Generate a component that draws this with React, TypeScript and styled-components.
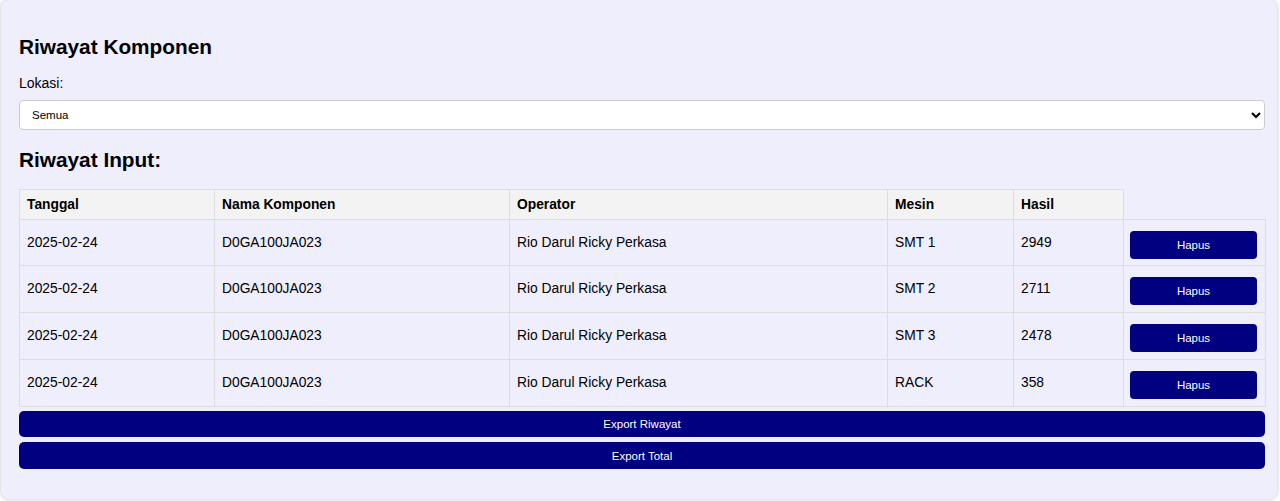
import React from 'react'
import styled, { createGlobalStyle } from 'styled-components'

const GlobalStyle = createGlobalStyle`
  html, body {
    margin: 0;
    padding: 0;
    background: #ffffff;
    font-family: "Liberation Sans", Arial, sans-serif;
    color: #000;
  }
  * {
    box-sizing: border-box;
  }
`;

interface HistoryRow {
  tanggal: string;
  komponen: string;
  operator: string;
  mesin: string;
  hasil: number;
}

const rows: HistoryRow[] = [
  { tanggal: '2025-02-24', komponen: 'D0GA100JA023', operator: 'Rio Darul Ricky Perkasa', mesin: 'SMT 1', hasil: 2949 },
  { tanggal: '2025-02-24', komponen: 'D0GA100JA023', operator: 'Rio Darul Ricky Perkasa', mesin: 'SMT 2', hasil: 2711 },
  { tanggal: '2025-02-24', komponen: 'D0GA100JA023', operator: 'Rio Darul Ricky Perkasa', mesin: 'SMT 3', hasil: 2478 },
  { tanggal: '2025-02-24', komponen: 'D0GA100JA023', operator: 'Rio Darul Ricky Perkasa', mesin: 'RACK', hasil: 358 },
];

const columns = ['Tanggal', 'Nama Komponen', 'Operator', 'Mesin', 'Hasil'];
const widths = [195, 295, 378, 126, 110, 142];

const App = () => {
  return (
    <>
      <GlobalStyle />
      <Page>
        <Container>
          <Title>Riwayat Komponen</Title>
          <Label htmlFor="lokasi">Lokasi:</Label>
          <Select id="lokasi" defaultValue="semua">
            <option value="semua">Semua</option>
            <option value="smt1">SMT 1</option>
            <option value="smt2">SMT 2</option>
            <option value="smt3">SMT 3</option>
            <option value="rack">RACK</option>
          </Select>
          <SubTitle>Riwayat Input:</SubTitle>
          <Table>
            <colgroup>
              {widths.map((w, i) => (
                <col key={i} style={{ width: w }} />
              ))}
            </colgroup>
            <thead>
              <tr>
                {columns.map((c) => (
                  <Th key={c}>{c}</Th>
                ))}
              </tr>
            </thead>
            <tbody>
              {rows.map((r, i) => (
                <tr key={i}>
                  <Td>{r.tanggal}</Td>
                  <Td>{r.komponen}</Td>
                  <Td>{r.operator}</Td>
                  <Td>{r.mesin}</Td>
                  <Td>{r.hasil}</Td>
                  <ActionTd>
                    <DeleteButton>Hapus</DeleteButton>
                  </ActionTd>
                </tr>
              ))}
            </tbody>
          </Table>
          <ExportButton>Export Riwayat</ExportButton>
          <ExportButton>Export Total</ExportButton>
        </Container>
      </Page>
    </>
  )
}

const Page = styled.div`
  padding: 0 3px 2px 1px;
`;

const Container = styled.div`
  display: flex;
  flex-direction: column;
  height: 499px;
  padding: 34px 12px 30px 18px;
  background: #eeeefd;
  border-radius: 8px;
  box-shadow: 0 0 4px rgba(0, 0, 0, 0.25);
`;

const Title = styled.h2`
  margin: 0 0 16px;
  font-size: 20.8px;
  line-height: 25px;
  font-weight: 700;
`;

const SubTitle = styled.h3`
  margin: 17px 0 17px;
  font-size: 20.8px;
  line-height: 25px;
  font-weight: 700;
`;

const Label = styled.label`
  font-size: 14px;
  line-height: 16px;
  margin-bottom: 9px;
`;

const Select = styled.select`
  width: 100%;
  height: 30px;
  padding: 0 8px;
  font-family: "Liberation Sans", Arial, sans-serif;
  font-size: 11.5px;
  color: #000;
  background: #ffffff;
  border: 1px solid #cccccc;
  border-radius: 4px;
`;

const Table = styled.table`
  width: 100%;
  border-collapse: collapse;
  table-layout: fixed;
  font-size: 13.8px;
`;

const Th = styled.th`
  text-align: left;
  font-weight: 700;
  padding: 7px 7px;
  line-height: 15px;
  background: #f3f3f3;
  border: 1px solid #dddddd;
`;

const Td = styled.td`
  padding: 7px 7px;
  line-height: 16px;
  height: 46.75px;
  vertical-align: middle;
  border: 1px solid #dddddd;
`;

const ActionTd = styled(Td)`
  padding: 6px 8px 6px 6px;
`;

const DeleteButton = styled.button`
  display: block;
  width: 100%;
  height: 28px;
  margin-top: 4px;
  font-family: "Liberation Sans", Arial, sans-serif;
  font-size: 11.5px;
  color: #ffffff;
  background: #000080;
  border: none;
  border-radius: 4px;
  cursor: pointer;
`;

const ExportButton = styled.button`
  width: 100%;
  height: 27px;
  margin-top: 4px;
  font-family: "Liberation Sans", Arial, sans-serif;
  font-size: 11.5px;
  color: #ffffff;
  background: #000080;
  border: none;
  border-radius: 5px;
  cursor: pointer;

  & + & {
    margin-top: 5px;
  }
`;

export default App
